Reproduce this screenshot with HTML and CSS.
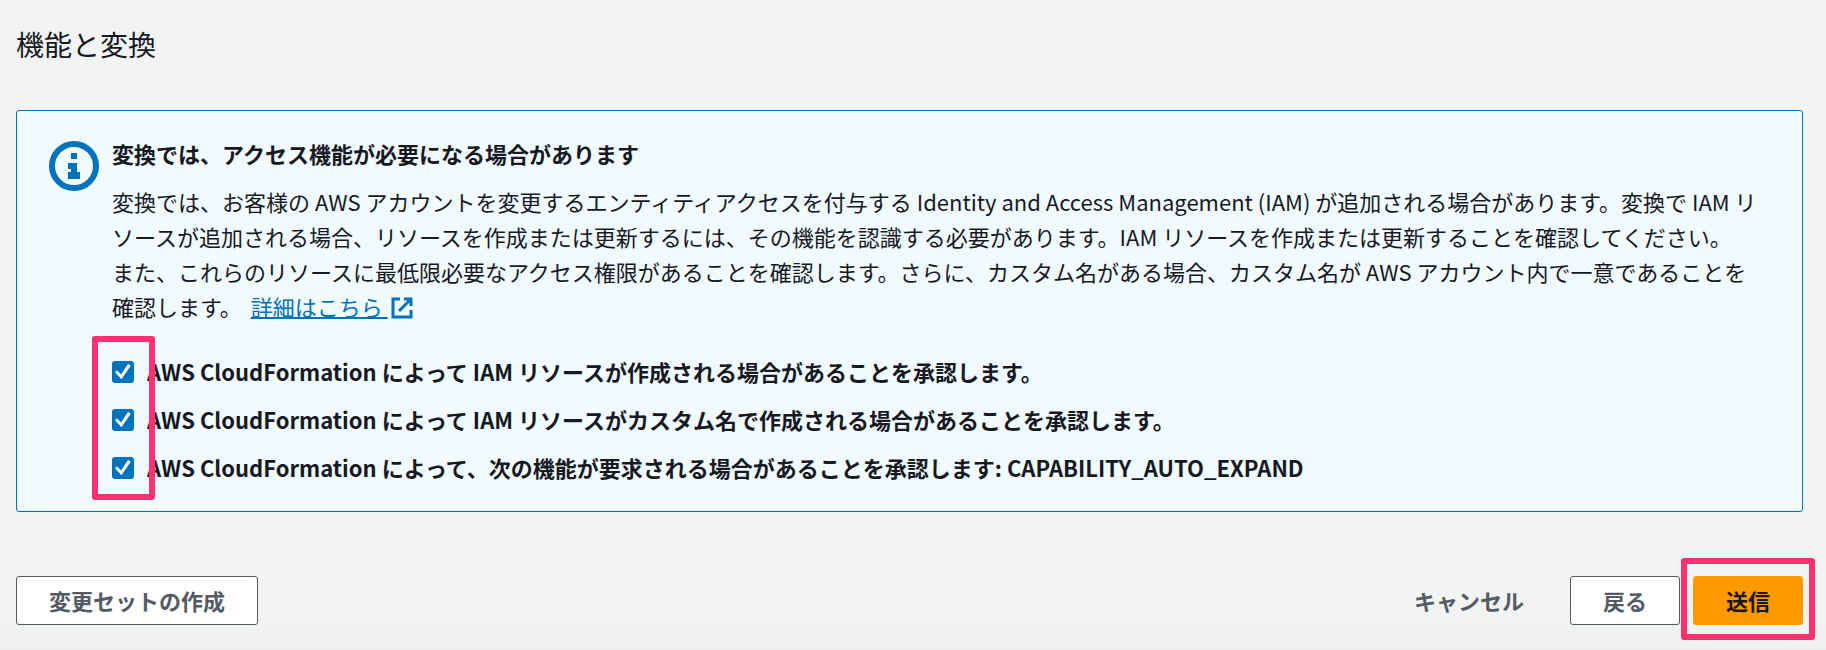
FILE: index.html
```
<!DOCTYPE html>
<html lang="ja">
<head>
  <meta charset="UTF-8" />
  <meta name="viewport" content="width=device-width, initial-scale=1.0"/>
  <title>機能と変換</title>
  <link rel="stylesheet" href="styles.css">
</head>
<body>
  <main class="page">
    <h2 class="heading">機能と変換</h2>

    <section class="alert">
      <svg class="info-icon" viewBox="0 0 50 50" aria-hidden="true">
        <circle cx="25" cy="25" r="22" fill="none" stroke="#0073bb" stroke-width="6"/>
        <path d="M22 12h6v6h-6zM19 22h9v9h3v7H19v-7h3v-3h-3z" fill="#0073bb"/>
      </svg>

      <div class="alert-body">
        <h3 class="alert-title">変換では、アクセス機能が必要になる場合があります</h3>
        <p class="alert-text">
          変換では、お客様の AWS アカウントを変更するエンティティアクセスを付与する Identity and Access Management (IAM) が追加される場合があります。変換で IAM リソースが追加される場合、リソースを作成または更新するには、その機能を認識する必要があります。IAM リソースを作成または更新することを確認してください。<br>また、これらのリソースに最低限必要なアクセス権限があることを確認します。さらに、カスタム名がある場合、カスタム名が AWS アカウント内で一意であることを確認します。
          <a class="link" href="#"><span class="link-text">詳細はこちら&nbsp;</span><svg class="link-icon" viewBox="0 0 24 24" aria-hidden="true"><path d="M10 3H3v18h18v-7M14 3h7v7M21 3L9 15" fill="none" stroke="#0073bb" stroke-width="3"/></svg></a>
        </p>

        <div class="checks">
          <label class="check">
            <input type="checkbox" checked>
            <span>AWS CloudFormation によって IAM リソースが作成される場合があることを承認します。</span>
          </label>
          <label class="check">
            <input type="checkbox" checked>
            <span>AWS CloudFormation によって IAM リソースがカスタム名で作成される場合があることを承認します。</span>
          </label>
          <label class="check">
            <input type="checkbox" checked>
            <span>AWS CloudFormation によって、次の機能が要求される場合があることを承認します: CAPABILITY_AUTO_EXPAND</span>
          </label>
          <div class="mark mark-checks"></div>
        </div>
      </div>
    </section>

    <div class="actions">
      <button class="btn">変更セットの作成</button>
      <div class="actions-right">
        <button class="btn btn-link">キャンセル</button>
        <button class="btn">戻る</button>
        <div class="submit">
          <button class="btn btn-primary">送信</button>
          <div class="mark mark-submit"></div>
        </div>
      </div>
    </div>
  </main>
</body>
</html>
```
FILE: styles.css
```
* {
  margin: 0;
  padding: 0;
  box-sizing: border-box;
}

body {
  min-height: 100vh;
  background: linear-gradient(to top, #eeefef, #f2f3f3 40px);
  color: #16191f;
  font-family: "Noto Sans CJK JP", sans-serif;
  font-size: 22px;
  line-height: 35px;
}

.page {
  padding: 23px 23px 16px 16px;
}

.heading {
  font-size: 28px;
  font-weight: 400;
  line-height: 42px;
}

.alert {
  display: flex;
  gap: 13px;
  margin-top: 45px;
  padding: 25px 34px 26px 32px;
  border: 1px solid #0073bb;
  border-radius: 3px;
  background: #f1faff;
}

.info-icon {
  flex: none;
  width: 50px;
  height: 50px;
  margin-top: 5px;
}

.alert-body {
  flex: 1;
}

.alert-title {
  font-size: 22px;
  font-weight: 700;
}

.alert-text {
  margin-top: 13px;
}

.link {
  margin-left: 4px;
  color: #0073bb;
  text-decoration: none;
}

.link-text {
  text-decoration: underline;
  text-decoration-thickness: 2px;
}

.link-icon {
  width: 24px;
  height: 24px;
  margin-left: 2px;
  vertical-align: -4px;
}

.checks {
  display: flex;
  flex-direction: column;
  gap: 13px;
  margin-top: 30px;
  position: relative;
}

.check {
  display: flex;
  align-items: center;
  gap: 13px;
  font-weight: 700;
}

.check input {
  appearance: none;
  display: grid;
  place-content: center;
  flex: none;
  width: 22px;
  height: 22px;
  border-radius: 3px;
  background: #0073bb;
}

.check input:checked::before {
  content: "";
  width: 16px;
  height: 16px;
  background: #fff;
  clip-path: polygon(0 55%, 14% 43%, 37% 68%, 82% 3%, 99% 14%, 40% 98%);
}

/* pink frames over the content */
.mark {
  position: absolute;
  border: 6px solid #ff3170;
  border-radius: 3px;
  pointer-events: none;
}

.mark-checks {
  top: -18px;
  bottom: -15px;
  left: -20px;
  width: 63px;
}

.mark-submit {
  inset: -18px -12px -15px;
}

.actions,
.actions-right {
  display: flex;
  align-items: center;
}

.actions {
  justify-content: space-between;
  margin-top: 64px;
}

.actions-right {
  gap: 13px;
}

.btn {
  padding: 6px 32px;
  border: 1px solid #545b64;
  border-radius: 3px;
  background: #fff;
  color: #545b64;
  font: inherit;
  font-weight: 700;
  cursor: pointer;
}

.btn-link {
  border-color: transparent;
  background: transparent;
}

.btn-primary {
  border-color: #ff9900;
  background: #ff9900;
  color: #16191f;
}

.submit {
  position: relative;
}
```
